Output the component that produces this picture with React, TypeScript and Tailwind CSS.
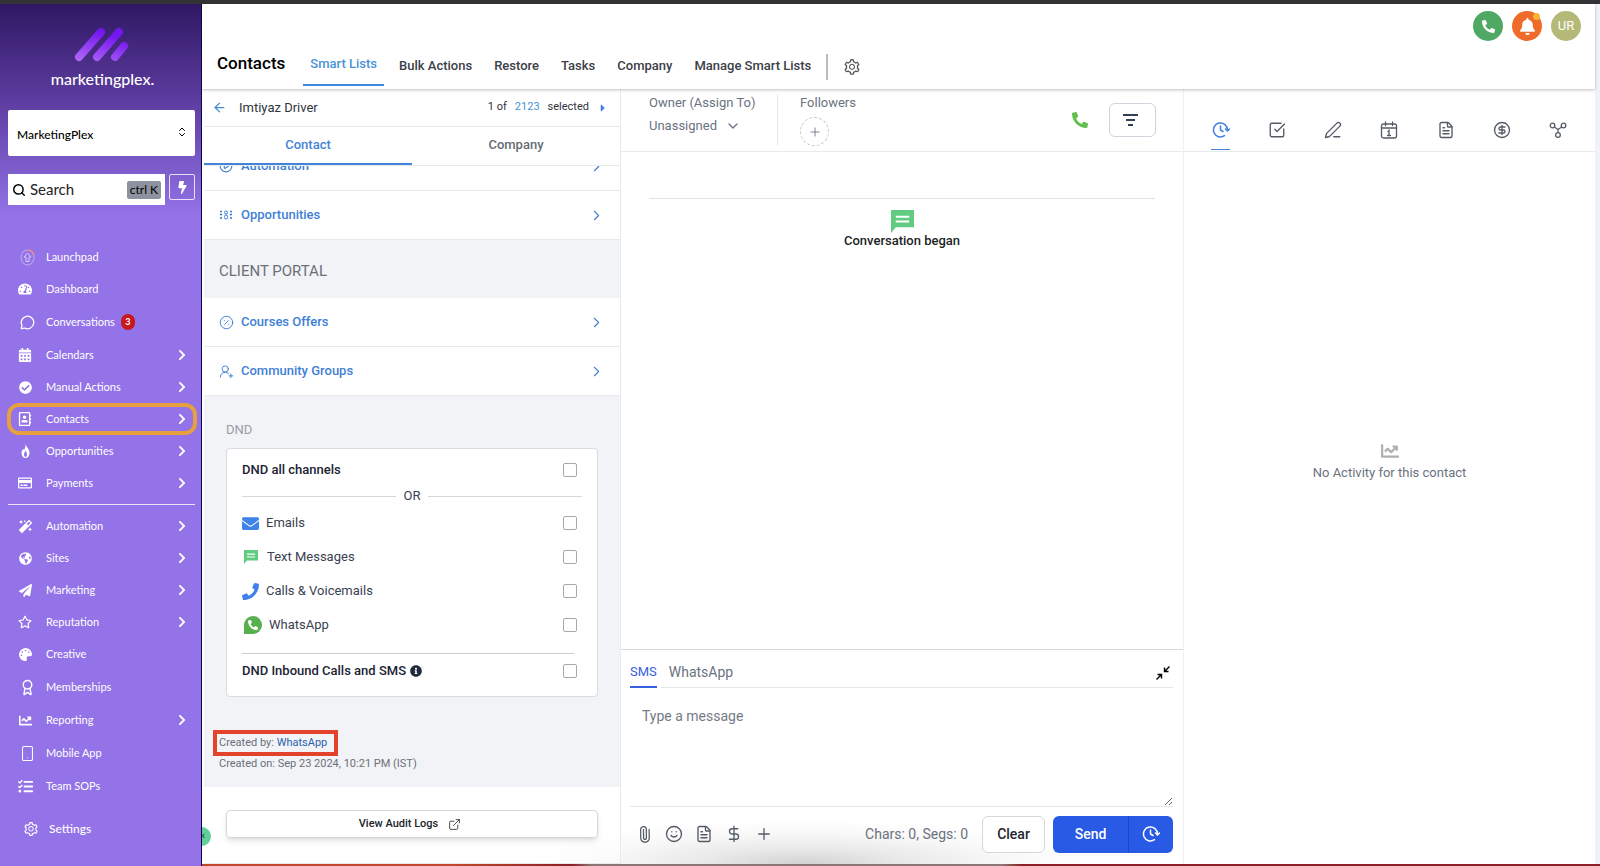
import React from 'react';
import {
  FaBell,
  FaBolt,
  FaCalendarAlt,
  FaCaretRight,
  FaChartLine,
  FaCheckCircle,
  FaChevronRight,
  FaEnvelope,
  FaGlobeAmericas,
  FaInfoCircle,
  FaMagic,
  FaPalette,
  FaPaperPlane,
  FaPhone,
  FaRegAddressBook,
  FaRegCreditCard,
  FaRegStar,
  FaTachometerAlt,
  FaTasks,
} from 'react-icons/fa';
import {
  Award,
  ArrowLeft,
  ChevronDown,
  ChevronRight,
  ChevronsUpDown,
  CircleDollarSign,
  CirclePercent,
  CirclePlay,
  DollarSign,
  ExternalLink,
  FileText,
  MessageCircle,
  Paperclip,
  PenLine,
  Plus,
  Search,
  Smartphone,
  Smile,
  SquareCheckBig,
  UserRoundPlus,
} from 'lucide-react';
import { AiOutlineSetting } from 'react-icons/ai';

interface NavItem {
  label: string;
  icon: React.ReactNode;
  arrow?: boolean;
  badge?: number;
  active?: boolean;
  tall?: boolean;
}

const LaunchIcon = () => (
  <svg width="15" height="17" viewBox="0 0 15 17" fill="none" className="ml-1">
    <ellipse cx="7.5" cy="8.5" rx="6.5" ry="7.5" stroke="#c3b0f3" />
    <path d="M8 1c3 .3 5 2 5.8 4.5" stroke="#e88a8a" strokeWidth="1.5" />
    <path d="M7.5 4l3.5 4H9v4.500H6V8H4z" stroke="#d9cdf8" strokeLinejoin="round" />
  </svg>
);

const FlameIcon = () => (
  <svg width="9" height="14" viewBox="0 0 9 14" fill="#fff">
    <path fillRule="evenodd" d="M4.500 0C5 2.500 8.500 5 8.500 9c0 3-2 5-4 5s-4-2-4-5c0-2 1-3 1.700-4.200L3 6.200C4 4.500 4.600 2.500 4.500 0zM4.500 6.500C4 8 3 9 3 10.500S3.800 13 4.500 13 6 12 6 10.500 5 8 4.500 6.500z" />
  </svg>
);

const mainNav: NavItem[] = [
  { label: 'Launchpad', icon: <LaunchIcon /> },
  { label: 'Dashboard', icon: <FaTachometerAlt size={14} /> },
  { label: 'Conversations', icon: <MessageCircle size={15} className="ml-1" />, badge: 3, tall: true },
  { label: 'Calendars', icon: <FaCalendarAlt size={14} />, arrow: true },
  { label: 'Manual Actions', icon: <FaCheckCircle size={13} />, arrow: true },
  { label: 'Contacts', icon: <FaRegAddressBook size={14} />, arrow: true, active: true },
  { label: 'Opportunities', icon: <FlameIcon />, arrow: true },
  { label: 'Payments', icon: <FaRegCreditCard size={14} />, arrow: true },
];

const moreNav: NavItem[] = [
  { label: 'Automation', icon: <FaMagic size={13} />, arrow: true },
  { label: 'Sites', icon: <FaGlobeAmericas size={13} />, arrow: true },
  { label: 'Marketing', icon: <FaPaperPlane size={13} />, arrow: true },
  { label: 'Reputation', icon: <FaRegStar size={14} />, arrow: true },
  { label: 'Creative', icon: <FaPalette size={13} /> },
  { label: 'Memberships', icon: <Award size={17} className="ml-1" />, tall: true },
  { label: 'Reporting', icon: <FaChartLine size={13} />, arrow: true },
  { label: 'Mobile App', icon: <Smartphone size={17} strokeWidth={1.5} className="ml-1" />, tall: true },
  { label: 'Team SOPs', icon: <FaTasks size={15} /> },
];

const NavRow: React.FC<{ item: NavItem }> = ({ item }) => (
  <a
    href="#"
    className={`mr-1 ml-[7px] flex items-center rounded-xl pr-[9px] pl-[7px] text-[11px] text-white ${item.tall ? 'h-[34px]' : 'h-8'} ${
      item.active ? 'outline-4 -outline-offset-4 outline-[#e6a040]' : ''
    }`}
  >
    <span className="flex w-[22px] justify-center">{item.icon}</span>
    <span className="ml-[10px]">{item.label}</span>
    {item.badge && (
      <span className="ml-[6px] flex h-4 w-[14px] items-center justify-center rounded-full bg-[#c8171d] text-[9px] font-bold">
        {item.badge}
      </span>
    )}
    {item.arrow && <FaChevronRight size={12} className="ml-auto" />}
  </a>
);

const Logo = () => (
  <div className="flex flex-col items-center pt-[23px]">
    <svg width="56" height="36" viewBox="0 0 56 36" fill="none" strokeWidth="8" strokeLinecap="round">
      <defs>
        <linearGradient id="bar" gradientUnits="userSpaceOnUse" x1="0" y1="34" x2="10" y2="0">
          <stop stopColor="#b46cf8" />
          <stop offset="1" stopColor="#7416ee" />
        </linearGradient>
      </defs>
      <path d="M6 30L28 5" stroke="url(#bar)" />
      <path d="M24 30L46 5" stroke="url(#bar)" />
      <path d="M42 30L51 19" stroke="url(#bar)" />
    </svg>
    <span className="mt-1 pl-1 text-[16px] leading-6 font-medium text-white">marketingplex.</span>
  </div>
);

const Sidebar = () => (
  <aside className="z-10 flex w-[202px] shrink-0 flex-col border-r border-[#0b0350] bg-[#9373e7] bg-[linear-gradient(#2f1863_0px,#5c3c9f_95px,#9373e7_212px)] font-[Lato,sans-serif]">
    <Logo />
    <div className="relative mr-[6px] ml-2 mt-[19px]">
      <select
        aria-label="Account"
        className="h-[46px] w-full appearance-none rounded-xs bg-white px-[9px] pt-1 text-[12px] font-medium text-black"
      >
        <option>MarketingPlex</option>
      </select>
      <ChevronsUpDown size={12} className="pointer-events-none absolute top-4 right-[7px]" />
    </div>
    <div className="mr-[6px] ml-2 mt-[18px] flex items-start gap-1">
      <label className="flex h-[31px] min-w-0 flex-1 items-center bg-white pr-1 pl-1">
        <Search size={14} className="shrink-0" strokeWidth={2.5} />
        <input
          type="text"
          placeholder="Search"
          aria-label="Search"
          className="ml-1 w-0 flex-1 text-[15px] text-black outline-none placeholder:text-[#222]"
        />
        <kbd className="rounded-xs bg-[#8e929e] px-[3px] font-[Lato,sans-serif] text-[12px] leading-[18px] text-black">ctrl K</kbd>
      </label>
      <button aria-label="Quick actions" className="flex h-[26px] w-[26px] items-center justify-center rounded-xs border border-white/80 text-white">
        <FaBolt size={13} />
      </button>
    </div>
    <nav className="mt-9">
      {mainNav.map((item) => (
        <NavRow key={item.label} item={item} />
      ))}
      <hr className="mr-[6px] ml-2 mt-[5px] mb-[5px] border-white/80" />
      {moreNav.map((item) => (
        <NavRow key={item.label} item={item} />
      ))}
      <a href="#" className="mt-[11px] ml-[23px] flex h-8 items-center gap-[10px] text-[12px] font-medium text-white">
        <AiOutlineSetting size={16} />
        Settings
      </a>
    </nav>
  </aside>
);

const tabs = ['Bulk Actions', 'Restore', 'Tasks', 'Company', 'Manage Smart Lists'];

const Header = () => (
  <header className="z-[5] flex h-[85px] shrink-0 justify-between bg-white shadow-[0_1px_3px_rgba(0,0,0,0.25)]">
    <div className="flex items-end pl-[15px]">
      <h1 className="pb-[14px] text-[17px] leading-6 font-medium text-black">Contacts</h1>
      <nav className="ml-[18px] flex items-end text-[13px] leading-5 font-medium text-[#3c4048]">
        <a href="#" className="mb-[3px] border-b-2 border-[#3f8ad8] px-[7px] pb-[10px] text-[#4a92d6]">
          Smart Lists
        </a>
        <div className="ml-[15px] flex gap-[22px] pb-[13px]">
          {tabs.map((t) => (
            <a href="#" key={t}>
              {t}
            </a>
          ))}
        </div>
      </nav>
      <button aria-label="List settings" className="mb-[9px] ml-[15px] flex h-[26px] items-center border-l-2 border-[#bbb] pl-[15px] text-[#555]">
        <AiOutlineSetting size={18} />
      </button>
    </div>
    <div className="flex gap-[9px] pt-[7px] pr-[14px]">
      <button aria-label="Call" className="flex size-[30px] items-center justify-center rounded-full bg-[#4fa863] text-white">
        <FaPhone size={13} className="-scale-x-100" />
      </button>
      <button aria-label="Notifications" className="relative flex size-[30px] items-center justify-center rounded-full bg-[#ee6b2a] text-white">
        <FaBell size={17} />
        <span className="absolute top-[2px] right-[2px] size-[7px] rounded-full bg-[#f9b233]" />
      </button>
      <button className="size-[30px] rounded-full bg-[#b4b978] text-[13px] text-white">UR</button>
    </div>
  </header>
);

const OpportunityIcon = () => (
  <svg width="14" height="14" viewBox="0 0 14 14" fill="none" stroke="currentColor">
    <circle cx="7" cy="4.5" r="1.5" />
    <rect x="5.5" y="7" width="3" height="4" rx="1.5" />
    <path d="M1 3.500h2M1 6l2 1M1 10.500l2-1M13 3.500h-2M13 6l-2 1M13 10.500l-2-1" strokeWidth="1.5" />
  </svg>
);

const SectionRow: React.FC<{ label: string; icon: React.ReactNode }> = ({ label, icon }) => (
  <button className="flex h-[49px] w-full shrink-0 items-center border-b border-[#e8eaee] bg-white pr-[15px] pl-[15px] text-[13px] font-medium text-[#3f7fd6]">
    <span className="flex w-[22px]">{icon}</span>
    {label}
    <ChevronRight size={17} strokeWidth={1.5} className="ml-auto" />
  </button>
);

const MessageIcon: React.FC<{ className: string }> = ({ className }) => (
  <svg viewBox="0 0 24 24" fill="currentColor" className={`text-[#62cb82] ${className}`}>
    <path d="M0 0h24v18H5l-5 6z" />
    <path d="M5 7h14M5 12h14" stroke="#fff" strokeWidth="2" />
  </svg>
);

const WhatsAppIcon = () => (
  <span className="ml-[2px] flex size-[18px] items-center justify-center rounded-full rounded-bl-sm bg-[#56b04d] text-white">
    <FaPhone size={10} className="-scale-x-100" />
  </span>
);

const channels = [
  { id: 'emails', label: 'Emails', icon: <FaEnvelope size={17} className="text-[#3f83e8]" /> },
  { id: 'texts', label: 'Text Messages', icon: <MessageIcon className="mr-[2px] ml-[2px] size-[14px]" /> },
  { id: 'calls', label: 'Calls & Voicemails', icon: <FaPhone size={17} className="text-[#3f83e8]" /> },
  { id: 'whatsapp', label: 'WhatsApp', icon: <WhatsAppIcon /> },
];

const CheckBox: React.FC<{ id: string }> = ({ id }) => (
  <input id={id} type="checkbox" className="ml-auto size-[14px] appearance-none rounded-xs border border-[#a5a8ad] bg-white" />
);

const DndCard = () => (
  <div className="mx-[22px] mt-2 rounded border border-[#d8dbe0] bg-white px-[15px] pb-2 text-[13px] text-[#3a4150]">
    <div className="flex h-[42px] items-center pr-[5px]">
      <label htmlFor="dnd-all" className="font-medium text-[#1b2333]">DND all channels</label>
      <CheckBox id="dnd-all" />
    </div>
    <div className="flex h-[10px] items-center gap-2">
      <hr className="flex-1 border-[#d5d7db]" />
      OR
      <hr className="flex-1 border-[#d5d7db]" />
    </div>
    <div className="mt-[5px] mb-[11px]">
      {channels.map((c) => (
        <div key={c.id} className="flex h-[34px] items-center pr-[5px]">
          {c.icon}
          <label htmlFor={c.id} className="ml-[7px]">{c.label}</label>
          <CheckBox id={c.id} />
        </div>
      ))}
    </div>
    <hr className="mr-2 border-[#c9ccd1]" />
    <div className="flex h-[34px] items-center gap-1 pr-[5px]">
      <label htmlFor="dnd-inbound" className="font-medium text-[#1b2333]">DND Inbound Calls and SMS</label>
      <FaInfoCircle size={12} className="text-[#1f2a3c]" />
      <CheckBox id="dnd-inbound" />
    </div>
  </div>
);

const ContactPanel = () => (
  <section className="relative flex w-[419px] shrink-0 flex-col overflow-hidden border-r border-[#e8eaee] pl-[2px]">
    <div className="flex h-[38px] items-center border-b border-[#e8eaee] pr-[11px] pl-[8px] text-[13px] text-[#30343c]">
      <ArrowLeft size={15} className="text-[#3f8ad8]" />
      <span className="ml-3">Imtiyaz Driver</span>
      <div className="ml-auto flex items-center gap-2 text-[11px]">
        <span>1 of</span>
        <a href="#" className="text-[#4a92d6]">2123</a>
        <span>selected</span>
        <FaCaretRight size={12} className="text-[#3f83e8]" />
      </div>
    </div>
    <div className="flex h-[39px] shrink-0 border-b border-[#e8eaee] text-[13px] font-medium">
      <button className="w-1/2 border-b-2 border-[#4484d8] text-[#4484d8]">Contact</button>
      <button className="w-1/2 border-b-2 border-transparent text-[#666b73]">Company</button>
    </div>
    <div className="flex flex-1 flex-col overflow-hidden bg-[#f2f3f7]">
      <div className="-mt-6 flex flex-col">
        <SectionRow label="Automation" icon={<CirclePlay size={14} />} />
        <SectionRow label="Opportunities" icon={<OpportunityIcon />} />
      </div>
      <h2 className="pt-[19px] pb-[15px] pl-[15px] text-[15px] leading-6 text-[#6b7079]">CLIENT PORTAL</h2>
      <SectionRow label="Courses Offers" icon={<CirclePercent size={15} strokeWidth={1.5} />} />
      <SectionRow label="Community Groups" icon={<UserRoundPlus size={15} strokeWidth={1.5} />} />
      <h3 className="mt-6 pl-[22px] text-[13px] leading-5 text-[#999da6]">DND</h3>
      <DndCard />
      <div className="mt-[33px] pl-[9px] text-[11px] text-[#6b7079]">
        <p className="flex h-[26px] w-[125px] items-center border-4 border-[#e2432a] pl-[2px] whitespace-nowrap">
          Created by:&nbsp;<a href="#" className="text-[#2b62ae]">WhatsApp</a>
        </p>
        <p className="pl-[6px] leading-4">Created on: Sep 23 2024, 10:21 PM (IST)</p>
      </div>
    </div>
    <div className="shrink-0 border-b border-[#e8eaee] bg-white/50 px-[22px] pt-[23px] pb-[25px]">
      <button className="flex h-[28px] w-full items-center justify-center gap-[10px] rounded border border-[#d5d7db] bg-white pr-1 text-[11px] font-medium text-[#20242c] shadow-md">
        View Audit Logs
        <ExternalLink size={13} strokeWidth={1.5} />
      </button>
    </div>
    {/* sidebar toggle, tucked behind the sidebar edge */}
    <button aria-label="Collapse sidebar" className="absolute bottom-[18px] -left-[10px] flex size-[19px] items-center justify-end rounded-full bg-[#63cf98] pr-[6px] text-[11px] font-bold text-[#1a4a35]">
      ‹
    </button>
  </section>
);

const ClockIcon: React.FC<{ size: number }> = ({ size }) => (
  <svg width={size} height={size} viewBox="0 0 18 18" fill="none" stroke="currentColor" strokeWidth="1.5" strokeLinecap="round" strokeLinejoin="round">
    <path d="M15.500 9a7 7 0 1 0-3 5.700" />
    <path d="M8.500 5v4l2.500 1.500M13.500 8l2 2 2-2" />
  </svg>
);

const CollapseIcon = () => (
  <svg width="14" height="14" viewBox="0 0 14 14" fill="none" stroke="currentColor" strokeWidth="1.4">
    <path d="M13.500.5L9 5M8.500 1.500v4h4M.5 13.500L5 9M1.500 8.500h4v4" />
  </svg>
);

const Composer = () => (
  <div className="shrink-0 border-t border-[#d5d7db] pr-[10px] pl-[9px] text-[14px]">
    <div className="flex h-[38px] items-end gap-1">
      <button className="h-[30px] border-b-2 border-[#3560e0] text-[13px] text-[#3560e0]">SMS</button>
      <div className="flex h-[30px] flex-1 items-center justify-between border-b border-[#e5e7eb] pr-[3px] pl-2">
        <button className="text-[#6b7280]">WhatsApp</button>
        <button aria-label="Minimize" className="text-black">
          <CollapseIcon />
        </button>
      </div>
    </div>
    <textarea
      aria-label="Message"
      placeholder="Type a message"
      className="block h-[119px] w-full resize border-b border-[#e5e7eb] px-3 py-[18px] leading-5 outline-none placeholder:text-[#757b85]"
    />
    <div className="flex h-[57px] items-center pb-[3px] text-[#555b66]">
      <div className="flex items-center gap-3 pl-[6px]">
        <button aria-label="Attach"><Paperclip size={17} strokeWidth={1.8} className="-rotate-45" /></button>
        <button aria-label="Emoji"><Smile size={18} strokeWidth={1.8} /></button>
        <button aria-label="Template"><FileText size={18} strokeWidth={1.8} /></button>
        <button aria-label="Payment"><DollarSign size={18} strokeWidth={1.8} /></button>
        <button aria-label="More"><Plus size={18} strokeWidth={1.8} /></button>
      </div>
      <span className="mr-[14px] ml-auto text-[#6b7280]">Chars: 0, Segs: 0</span>
      <button className="h-[37px] w-[63px] rounded-md border border-[#d5d7db] bg-white text-[14px] font-medium text-[#23272f]">Clear</button>
      <div className="ml-2 flex h-[37px] overflow-hidden rounded-md bg-[#295ae6] text-white">
        <button className="w-[75px] text-[14px] font-medium">Send</button>
        <button aria-label="Schedule" className="flex w-[45px] items-center justify-center border-l border-[#1d47c4]">
          <ClockIcon size={18} />
        </button>
      </div>
    </div>
  </div>
);

const Conversation = () => (
  <section className="flex min-w-0 flex-1 flex-col">
    <div className="flex h-[63px] shrink-0 border-b border-[#e8eaee] pr-[27px] pl-[28px] text-[13px] text-[#6b7280]">
      <div className="my-[5px] w-[129px] border-r border-[#e5e7eb]">
        <p className="leading-[18px]">Owner (Assign To)</p>
        <button className="mt-1 flex items-center gap-2 leading-5">
          Unassigned
          <ChevronDown size={16} />
        </button>
      </div>
      <div className="mt-[5px] ml-[22px]">
        <p className="leading-[18px]">Followers</p>
        <button aria-label="Add follower" className="mt-[5px] flex size-[29px] items-center justify-center rounded-full border border-dashed border-[#c5c8cd]">
          <Plus size={14} strokeWidth={1.5} />
        </button>
      </div>
      <button aria-label="Call contact" className="ml-auto text-[#62c04f]">
        <FaPhone size={16} className="-scale-x-100" />
      </button>
      <button aria-label="Filter" className="mt-[14px] ml-[21px] flex h-[34px] w-[47px] items-center justify-center rounded-md border border-[#d0d5dd] pr-1 text-[#344054]">
        <svg width="15" height="12" viewBox="0 0 15 12" fill="none" stroke="currentColor" strokeWidth="2">
          <path d="M0 1h15M3 6h9M5 11h5" />
        </svg>
      </button>
    </div>
    <div className="flex flex-1 flex-col items-center px-[28px] pt-[46px] text-[13px] font-medium text-[#1c1f24]">
      <hr className="w-full border-[#e0e2e6]" />
      <MessageIcon className="mt-[11px] size-[23px]" />
      <span className="leading-4">Conversation began</span>
    </div>
    <Composer />
  </section>
);

const CalendarIcon = () => (
  <svg width="18" height="18" viewBox="0 0 18 18" fill="none" stroke="currentColor" strokeWidth="1.3" strokeLinecap="round">
    <rect x="1.5" y="3" width="15" height="14" rx="2" />
    <path d="M1.500 7h15M5.500 1v3.500M12.500 1v3.500M8 10.500l1-1v5M7.500 14.500h3" />
  </svg>
);

const NodesIcon = () => (
  <svg width="18" height="18" viewBox="0 0 18 18" fill="none" stroke="currentColor" strokeWidth="1.3">
    <circle cx="3.5" cy="4.5" r="2.3" />
    <circle cx="14.5" cy="4.5" r="2.3" />
    <circle cx="9" cy="14" r="2.3" />
    <path d="M5.300 6l3.700 2.500 3.700-2.500M9 8.500v3.200" />
  </svg>
);

const activityTabs = [
  { label: 'Activity', icon: <ClockIcon size={18} /> },
  { label: 'Tasks', icon: <SquareCheckBig size={18} strokeWidth={1.8} /> },
  { label: 'Notes', icon: <PenLine size={18} strokeWidth={1.8} /> },
  { label: 'Appointments', icon: <CalendarIcon /> },
  { label: 'Documents', icon: <FileText size={18} strokeWidth={1.8} /> },
  { label: 'Payments', icon: <CircleDollarSign size={18} strokeWidth={1.8} /> },
  { label: 'Associations', icon: <NodesIcon /> },
];

const ActivityPanel = () => (
  <section className="flex w-[412px] shrink-0 flex-col border-l border-[#eef0f3]">
    <div className="flex h-[63px] shrink-0 items-end justify-between border-b border-[#e8eaee] px-[27px] text-[#555b66]">
      {activityTabs.map((tab, i) => (
        <button
          key={tab.label}
          aria-label={tab.label}
          className={`mb-[1px] flex h-[29px] w-[19px] items-start justify-center border-b ${
            i === 0 ? 'border-[#4484d8] text-[#3f7fe0]' : 'border-transparent'
          }`}
        >
          {tab.icon}
        </button>
      ))}
    </div>
    <div className="flex flex-1 flex-col items-center justify-center pb-[91px] text-[13px] text-[#6b7280]">
      <FaChartLine size={18} className="text-[#b0b0b0]" />
      <p className="mt-[3px] leading-5">No Activity for this contact</p>
    </div>
  </section>
);

const App = () => (
  <div className="flex h-screen flex-col overflow-hidden border-t-4 border-[#333335] bg-white font-[Roboto,sans-serif]">
    <div className="flex min-h-0 flex-1">
      <Sidebar />
      <div className="flex min-w-0 flex-1 flex-col">
        <div className="flex min-h-0 flex-1 border-r-[5px] border-[#eff3f8]">
          <main className="flex min-w-0 flex-1 flex-col">
            <Header />
            <div className="flex min-h-0 flex-1 bg-[radial-gradient(ellipse_290px_44px_at_600px_100%,#d2d2d4,#e9e9ea_35%,#f8f8f8_70%,transparent)]">
              <ContactPanel />
              <Conversation />
              <ActivityPanel />
            </div>
          </main>
        </div>
        <div className="h-[2px] shrink-0 bg-[linear-gradient(90deg,#c0492c_250px,#8a1f24_370px,#8d7775_390px,#8d7775_800px,#8a1f24_820px)]" />
      </div>
    </div>
  </div>
);

export default App;
